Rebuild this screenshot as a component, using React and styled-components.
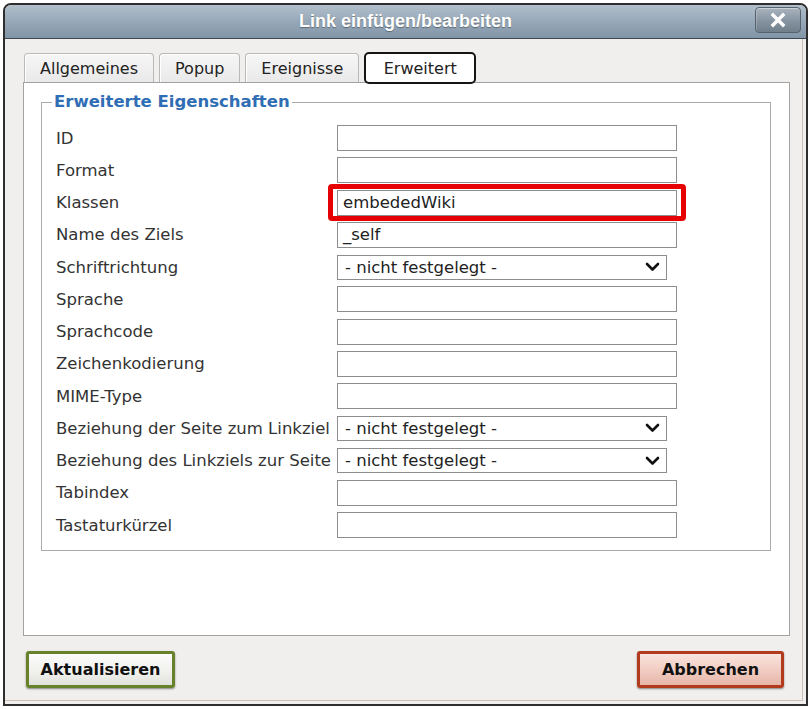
import React from "react";
import styled, { createGlobalStyle } from "styled-components";

const Global = createGlobalStyle`
  html, body { margin: 0; padding: 0; background: #ffffff; }
  body { font-family: "DejaVu Sans", Verdana, sans-serif; }
  * { box-sizing: border-box; }
`;

const Dialog = styled.div`
  margin: 3px 0 0 3px;
  width: 805px;
  height: 703px;
  border: 2px solid #2e2e2e;
  border-radius: 8px 8px 0 0;
  overflow: hidden;
  display: flex;
  flex-direction: column;
  background: #f0efed;
`;

const TitleBar = styled.div`
  height: 34px;
  flex: none;
  display: grid;
  grid-template-columns: 1fr auto 1fr;
  align-items: center;
  background: linear-gradient(#b2bfcb 0%, #97a8b8 50%, #8195a7 100%);
  border-bottom: 1px solid #3e4852;
`;

const Title = styled.div`
  grid-column: 2;
  font-family: "Liberation Sans", Arial, sans-serif;
  font-weight: bold;
  font-size: 18px;
  color: #ffffff;
  text-shadow: 0 1px 1px rgba(0, 0, 0, 0.35);
`;

const CloseButton = styled.div`
  grid-column: 3;
  justify-self: end;
  align-self: start;
  margin: 2px 5px 0 0;
  width: 46px;
  height: 26px;
  border-radius: 4px;
  border: 1px solid #56626d;
  background: linear-gradient(#a9b4be 0%, #8593a0 55%, #717f8b 100%);
  box-shadow: inset 0 1px 0 rgba(255, 255, 255, 0.4), inset 1px 0 0 rgba(255, 255, 255, 0.2);
  display: flex;
  align-items: center;
  justify-content: center;
`;

const Body = styled.div`
  flex: 1;
  display: flex;
  flex-direction: column;
  padding: 14px 16px 0 18px;
  box-shadow: inset -3px -3px 0 #f0efed, inset -4px -4px 0 #cbbfb7;
`;

const TabRow = styled.div`
  display: flex;
  align-items: flex-end;
  gap: 5px;
  padding-left: 1px;
  height: 29px;
  position: relative;
  z-index: 1;
`;

const Tab = styled.div`
  height: ${(p) => (p.$active ? "32px" : "29px")};
  margin-bottom: ${(p) => (p.$active ? "-2px" : "0")};
  padding: 0 ${(p) => (p.$active ? "17.5px" : "15px")};
  display: flex;
  align-items: center;
  font-size: 16px;
  color: #222;
  background: ${(p) =>
    p.$active ? "#ffffff" : "linear-gradient(#f6f6f6, #e9e9e9)"};
  border: ${(p) => (p.$active ? "2px solid #151515" : "1px solid #b9b9b9")};
  border-bottom: ${(p) => (p.$active ? "2px solid #151515" : "none")};
  border-radius: ${(p) => (p.$active ? "5px" : "4px 4px 0 0")};
  box-shadow: ${(p) => (p.$active ? "none" : "inset 1px 1px 0 #ffffff")};
`;

const Panel = styled.div`
  height: 554px;
  background: #ffffff;
  border: 1px solid #a2a2a2;
  padding: 9px 18px 0 17px;
`;

const Fieldset = styled.fieldset`
  margin: 0;
  border: 1px solid #ababab;
  padding: 13px 14px 12px 14px;
`;

const Legend = styled.legend`
  margin-left: -4px;
  padding: 0 2px;
  font-size: 16.5px;
  line-height: 20px;
  font-weight: bold;
  color: #2f6db4;
`;

const FormGrid = styled.div`
  display: grid;
  grid-template-columns: 281px 340px;
  grid-auto-rows: 26px;
  row-gap: 6.25px;
`;

const Label = styled.div`
  font-size: 16.5px;
  color: #333;
  display: flex;
  align-items: center;
  white-space: nowrap;
`;

const FieldWrap = styled.div`
  position: relative;
  display: flex;
  align-items: center;
`;

const Input = styled.div`
  width: 340px;
  height: 26px;
  border: 1px solid #8d8d8d;
  background: #fff;
  padding: 0 5px;
  font-size: 16.5px;
  color: #222;
  display: flex;
  align-items: center;
`;

const Select = styled.div`
  width: 330px;
  height: 25px;
  border: 1px solid #8d8d8d;
  background: #fff;
  padding: 0 6px 0 7px;
  font-size: 16.5px;
  color: #222;
  display: flex;
  align-items: center;
  justify-content: space-between;
`;

const Highlight = styled.div`
  position: absolute;
  left: -9px;
  right: -9px;
  top: -6px;
  bottom: -5px;
  border: 5px solid #e60000;
  border-radius: 4px;
  pointer-events: none;
`;

const ButtonRow = styled.div`
  display: flex;
  justify-content: space-between;
  padding: 15px 6px 0 3px;
`;

const Button = styled.div`
  width: ${(p) => p.$w}px;
  height: 37px;
  border: 3px solid ${(p) => (p.$danger ? "#b23a1d" : "#67822a")};
  border-radius: 3px;
  background: ${(p) =>
    p.$danger
      ? "linear-gradient(#f9e4de 0%, #f0cbc1 55%, #e7b6a9 100%)"
      : "linear-gradient(#fbfbfb 0%, #f1f1ee 55%, #e2e2dc 100%)"};
  box-shadow: 0 1px 2px rgba(0, 0, 0, 0.45);
  display: flex;
  align-items: center;
  justify-content: center;
  font-size: 16px;
  font-weight: bold;
  color: #111;
`;

const Chevron = () => (
  <svg width="15" height="10" viewBox="0 0 15 10">
    <path d="M2 2 L7.5 7.5 L13 2" fill="none" stroke="#111" strokeWidth="2.6" strokeLinecap="round" strokeLinejoin="round" />
  </svg>
);

const CloseX = () => (
  <svg width="16" height="16" viewBox="0 0 16 16">
    <path d="M3 3 L13 13 M13 3 L3 13" stroke="#ffffff" strokeWidth="3.4" strokeLinecap="square" />
  </svg>
);

const rows = [
  { label: "ID", type: "input" },
  { label: "Format", type: "input" },
  { label: "Klassen", type: "input", value: "embededWiki", highlight: true },
  { label: "Name des Ziels", type: "input", value: "_self" },
  { label: "Schriftrichtung", type: "select" },
  { label: "Sprache", type: "input" },
  { label: "Sprachcode", type: "input" },
  { label: "Zeichenkodierung", type: "input" },
  { label: "MIME-Type", type: "input" },
  { label: "Beziehung der Seite zum Linkziel", type: "select" },
  { label: "Beziehung des Linkziels zur Seite", type: "select" },
  { label: "Tabindex", type: "input" },
  { label: "Tastaturkürzel", type: "input" },
];

export default function App() {
  return (
    <>
      <Global />
      <Dialog>
        <TitleBar>
          <Title>Link einfügen/bearbeiten</Title>
          <CloseButton>
            <CloseX />
          </CloseButton>
        </TitleBar>
        <Body>
          <TabRow>
            <Tab>Allgemeines</Tab>
            <Tab>Popup</Tab>
            <Tab>Ereignisse</Tab>
            <Tab $active>Erweitert</Tab>
          </TabRow>
          <Panel>
            <Fieldset>
              <Legend>Erweiterte Eigenschaften</Legend>
              <FormGrid>
                {rows.map((r) => (
                  <React.Fragment key={r.label}>
                    <Label>{r.label}</Label>
                    <FieldWrap>
                      {r.type === "input" ? (
                        <Input>{r.value || ""}</Input>
                      ) : (
                        <Select>
                          <span>- nicht festgelegt -</span>
                          <Chevron />
                        </Select>
                      )}
                      {r.highlight && <Highlight />}
                    </FieldWrap>
                  </React.Fragment>
                ))}
              </FormGrid>
            </Fieldset>
          </Panel>
          <ButtonRow>
            <Button $w={149}>Aktualisieren</Button>
            <Button $w={147} $danger>
              Abbrechen
            </Button>
          </ButtonRow>
        </Body>
      </Dialog>
    </>
  );
}
